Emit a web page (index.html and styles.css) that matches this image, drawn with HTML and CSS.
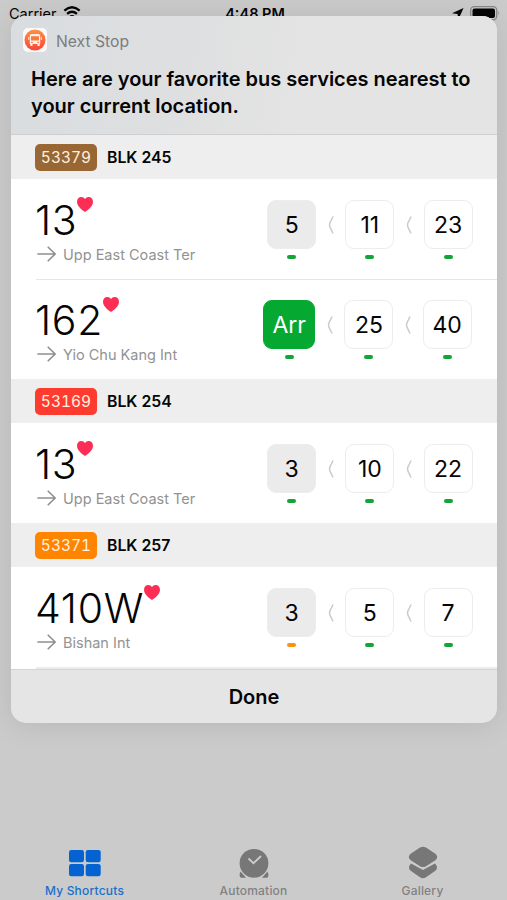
FILE: index.html
```
<!DOCTYPE html>
<html lang="en">

<head>
    <meta charset="UTF-8">
    <meta name="viewport" content="width=device-width, initial-scale=1.0">
    <title>Next Stop</title>
    <link rel="stylesheet" href="styles.css">
</head>

<body>

    <!-- Shared icons -->
    <svg class="defs" width="0" height="0">
        <symbol id="heart" viewBox="0 0 16 15">
            <path d="M8 15C6.600 14.200 0 10 0 4.800C0 2 1.900 0 4.300 0C6 0 7.300.9 8 2.200C8.700.9 10 0 11.700 0C14.100 0 16 2 16 4.800C16 10 9.400 14.200 8 15Z" fill="#fd2d55" />
        </symbol>
        <symbol id="arrow" viewBox="0 0 20 16">
            <path d="M1 8H18M11.200 1.200L18.200 8L11.200 14.800" fill="none" stroke="#8e8e8e" stroke-width="1.600" stroke-linecap="round" stroke-linejoin="round" />
        </symbol>
        <symbol id="chevron" viewBox="0 0 6 18">
            <path d="M4.800 1Q3.700 3.500 2.300 6.200Q.8 9 2.300 11.800Q3.700 14.500 4.800 17" fill="none" stroke="#cbcbcb" stroke-width="1.500" stroke-linecap="round" />
        </symbol>
    </svg>

    <!-- Status bar -->
    <div class="status">
        <div class="status-left">
            <span>Carrier</span>
            <svg width="18" height="15" viewBox="0 0 20 15">
                <path d="M1.500 5.300Q10-2 18.500 5.300M4.500 9Q10 4.300 15.500 9" fill="none" stroke="#050505" stroke-width="2.600" />
                <path d="M7 11.500Q10 9 13 11.500L10 14.500Z" fill="#050505" />
            </svg>
        </div>
        <div class="status-time">4:48 PM</div>
        <div class="status-right">
            <svg width="12" height="12" viewBox="0 0 12 12">
                <path d="M11.500 0L0 5.300L5.600 6L6.200 12Z" fill="#050505" />
            </svg>
            <svg width="31" height="15" viewBox="0 0 31 15">
                <rect x=".7" y=".7" width="26" height="13" rx="3.500" fill="none" stroke="#888" stroke-width="1.300" />
                <rect x="2.500" y="2.500" width="22.500" height="9.500" rx="2" fill="#050505" />
                <path d="M28.400 5V9.500Q30.200 7.300 28.400 5Z" fill="#888" />
            </svg>
        </div>
    </div>

    <!-- Shortcut result card -->
    <div class="card">
        <header class="card-header">
            <div class="app">
                <svg class="app-icon" width="24" height="24" viewBox="0 0 24 24">
                    <defs>
                        <linearGradient id="orange" x1="0" y1="0" x2="0" y2="1">
                            <stop offset="0" stop-color="#fb9344" />
                            <stop offset="1" stop-color="#fb4338" />
                        </linearGradient>
                    </defs>
                    <rect width="24" height="24" rx="5" fill="#fafafa" />
                    <circle cx="12" cy="12" r="10.500" fill="url(#orange)" />
                    <path d="M8.500 6H15.500Q17.200 6 17.200 7.700V16H6.800V7.700Q6.800 6 8.500 6Z" fill="#fff3e8" />
                    <path d="M8 8.200H16V12.500H8Z" fill="#fb7840" />
                    <path d="M7.300 15.500H9.500V18H7.300ZM14.500 15.500H16.700V18H14.500ZM5.300 9H6.200V12H5.300ZM17.800 9H18.700V12H17.800Z" fill="#fff3e8" />
                    <path d="M8.200 13.700H9.600V14.900H8.200ZM14.400 13.700H15.800V14.900H14.400Z" fill="#fb5c3c" />
                </svg>
                <span class="app-name">Next Stop</span>
            </div>
            <h1>Here are your favorite bus services nearest to<br>your current location.</h1>
        </header>

        <div class="stops">
            <div class="stop"><span class="code brown">53379</span><span class="stop-name">BLK 245</span></div>
            <div class="service">
                <div class="info">
                    <div class="number"><span>13</span><svg class="heart"><use href="#heart" /></svg></div>
                    <div class="dest"><svg class="arrow"><use href="#arrow" /></svg><span>Upp East Coast Ter</span></div>
                </div>
                <div class="times">
                    <div class="time first"><b>5</b><i></i></div>
                    <svg class="chevron"><use href="#chevron" /></svg>
                    <div class="time"><b>11</b><i></i></div>
                    <svg class="chevron"><use href="#chevron" /></svg>
                    <div class="time"><b>23</b><i></i></div>
                </div>
            </div>
            <div class="service line">
                <div class="info">
                    <div class="number"><span>162</span><svg class="heart"><use href="#heart" /></svg></div>
                    <div class="dest"><svg class="arrow"><use href="#arrow" /></svg><span>Yio Chu Kang Int</span></div>
                </div>
                <div class="times">
                    <div class="time arriving"><b>Arr</b><i></i></div>
                    <svg class="chevron"><use href="#chevron" /></svg>
                    <div class="time"><b>25</b><i></i></div>
                    <svg class="chevron"><use href="#chevron" /></svg>
                    <div class="time"><b>40</b><i></i></div>
                </div>
            </div>

            <div class="stop"><span class="code red">53169</span><span class="stop-name">BLK 254</span></div>
            <div class="service">
                <div class="info">
                    <div class="number"><span>13</span><svg class="heart"><use href="#heart" /></svg></div>
                    <div class="dest"><svg class="arrow"><use href="#arrow" /></svg><span>Upp East Coast Ter</span></div>
                </div>
                <div class="times">
                    <div class="time first"><b>3</b><i></i></div>
                    <svg class="chevron"><use href="#chevron" /></svg>
                    <div class="time"><b>10</b><i></i></div>
                    <svg class="chevron"><use href="#chevron" /></svg>
                    <div class="time"><b>22</b><i></i></div>
                </div>
            </div>

            <div class="stop"><span class="code orange">53371</span><span class="stop-name">BLK 257</span></div>
            <div class="service">
                <div class="info">
                    <div class="number"><span>410W</span><svg class="heart"><use href="#heart" /></svg></div>
                    <div class="dest"><svg class="arrow"><use href="#arrow" /></svg><span>Bishan Int</span></div>
                </div>
                <div class="times">
                    <div class="time first busy"><b>3</b><i></i></div>
                    <svg class="chevron"><use href="#chevron" /></svg>
                    <div class="time"><b>5</b><i></i></div>
                    <svg class="chevron"><use href="#chevron" /></svg>
                    <div class="time"><b>7</b><i></i></div>
                </div>
            </div>
            <div class="end-line"></div>
        </div>

        <div class="done">Done</div>
    </div>

    <!-- Tab bar -->
    <div class="tabs">
        <div class="tab active">
            <svg width="32" height="34" viewBox="0 0 32 34">
                <rect x="0" y="4" width="15" height="12.300" rx="2.300" />
                <rect x="16.700" y="4" width="15" height="12.300" rx="2.300" />
                <rect x="0" y="18" width="15" height="12.300" rx="2.300" />
                <rect x="16.700" y="18" width="15" height="12.300" rx="2.300" />
            </svg>
            <span>My Shortcuts</span>
        </div>
        <div class="tab">
            <svg width="32" height="34" viewBox="0 0 32 34">
                <path d="M2.800 25.500L8 31.700H3.500Q1.700 31.700 1.700 30V27.500ZM29.200 25.500L24 31.700H28.500Q30.300 31.700 30.300 30V27.500Z" />
                <circle cx="16" cy="17.300" r="14.400" stroke="#cdcdcd" stroke-width="2" paint-order="stroke" />
                <path d="M11 13L15.500 17.200L22.500 10.500" fill="none" stroke="#cdcdcd" stroke-width="1.800" stroke-linecap="round" />
            </svg>
            <span>Automation</span>
        </div>
        <div class="tab">
            <svg width="32" height="34" viewBox="0 0 32 34">
                <path d="M4 17.500L16 24L28 17.500Q32 22 28 25L19 31.300Q16 33.300 13 31.300L4 25Q0 22 4 17.500Z" />
                <path d="M13 1.500Q16-.2 19 1.500L28 7.500Q32.500 11 28 14.500L19 20.200Q16 22 13 20.200L4 14.500Q-.5 11 4 7.500Z" stroke="#cdcdcd" stroke-width="2.200" paint-order="stroke" />
            </svg>
            <span>Gallery</span>
        </div>
    </div>

</body>

</html>
```
FILE: styles.css
```
* {
    box-sizing: border-box;
}

body {
    margin: 0;
    width: 507px;
    height: 900px;
    position: relative;
    overflow: hidden;
    display: flex;
    flex-direction: column;
    justify-content: space-between;
    background: #cbcbcb;
    font-family: Inter, "Liberation Sans", sans-serif;
    color: #050505;
}

svg {
    display: block;
    flex: none;
}

.defs {
    position: absolute;
}

/* Status bar */
.status {
    display: grid;
    grid-template-columns: 1fr auto 1fr;
    height: 28px;
    padding: 5px 6px 0 9px;
    font-size: 14.5px;
    line-height: 18px;
    white-space: nowrap;
}

.status-left {
    display: flex;
    gap: 6px;
}

.status-time {
    font-weight: 600;
}

.status-right {
    display: flex;
    justify-content: flex-end;
    gap: 6px;
    padding-top: 1px;
}

.status-right svg:first-child {
    margin-top: 2px;
}

/* Card */
.card {
    position: absolute;
    top: 16px;
    left: 11px;
    width: 486px;
    height: 707px;
    display: flex;
    flex-direction: column;
    overflow: hidden;
    border-radius: 15px;
    background: #e5e5e5;
    box-shadow: 0 2px 30px rgba(0, 0, 0, 0.1);
}

.card-header {
    flex: none;
    height: 119px;
    padding: 12px 0 0 12px;
    border-bottom: 1px solid #cfcfcf;
    background: linear-gradient(100deg, #d9dde0 0%, #dedfe0 35%, #e4e4e4 60%);
}

.app {
    display: flex;
    align-items: center;
    gap: 9px;
    height: 24px;
}

.app-name {
    margin-top: 2px;
    font-size: 15.7px;
    color: #7b7d7e;
}

h1 {
    margin: 14px 0 0 8px;
    font-size: 20px;
    font-weight: 600;
    line-height: 27px;
    white-space: nowrap;
    letter-spacing: -0.02px;
}

.stops {
    flex: none;
    height: 535px;
    overflow: hidden;
    background: #fff;
    border-bottom: 1px solid #d4d4d4;
}

.stop {
    display: flex;
    align-items: center;
    gap: 10px;
    height: 44px;
    padding: 1px 0 0 24px;
    background: #eee;
}

.code {
    width: 62px;
    height: 27px;
    border-radius: 5px;
    font-size: 15.5px;
    font-variant-numeric: tabular-nums;
    line-height: 27px;
    text-align: center;
    color: #fff0df;
}

.brown {
    background: #986733;
}

.red {
    background: #ff3b30;
}

.orange {
    background: #ff8500;
}

.stop-name {
    font-size: 15.8px;
    font-weight: 600;
}

.service {
    position: relative;
    display: flex;
    justify-content: space-between;
    height: 100px;
    padding: 21px 24.5px 0 25px;
}

.line {
    padding-right: 25.4px;
}

.line::before {
    content: "";
    position: absolute;
    top: 0;
    left: 25px;
    right: 0;
    height: 1px;
    background: #e6e6e6;
}

.end-line {
    height: 2px;
    margin-left: 25px;
    background: #ececec;
}

.number {
    display: flex;
    height: 42px;
    margin-left: -1px;
    font-size: 41px;
    font-weight: 350;
    line-height: 40px;
    letter-spacing: 0.7px;
}

.heart {
    width: 16px;
    height: 15px;
    margin-top: -3px;
}

.dest {
    display: flex;
    align-items: center;
    gap: 6px;
    height: 24px;
    font-size: 14.5px;
    color: #929292;
}

.arrow {
    width: 20px;
    height: 16px;
    margin-left: 1px;
}

.times {
    display: flex;
}

.chevron {
    width: 6px;
    height: 18px;
    margin: 16px 11.6px 0;
}

.time b {
    display: block;
    width: 49px;
    height: 49px;
    border: 1px solid #ededed;
    border-radius: 9px;
    font-size: 23px;
    font-weight: 400;
    line-height: 48px;
    text-align: center;
}

.time i {
    display: block;
    width: 9px;
    height: 4px;
    margin: 6px auto 0;
    border-radius: 2px;
    background: #11a637;
}

.first b {
    background: #ebebeb;
}

.arriving b {
    width: 52px;
    border-color: #05a932;
    background: #05a932;
    color: #fff;
}

.busy i {
    background: #f8950f;
}

.done {
    flex: 1;
    font-size: 20px;
    font-weight: 600;
    line-height: 54px;
    text-align: center;
}

/* Tab bar */
.tabs {
    display: grid;
    grid-template-columns: repeat(3, 1fr);
    height: 54px;
    font-size: 12px;
    font-weight: 500;
    letter-spacing: 0.2px;
    color: #828282;
}

.tab {
    display: flex;
    flex-direction: column;
    align-items: center;
}

.tab svg {
    fill: #777;
}

.tab span {
    margin-top: 3px;
    line-height: 15px;
}

.tab.active {
    color: #1b6fca;
}

.tab.active svg {
    fill: #0562d1;
}
```
